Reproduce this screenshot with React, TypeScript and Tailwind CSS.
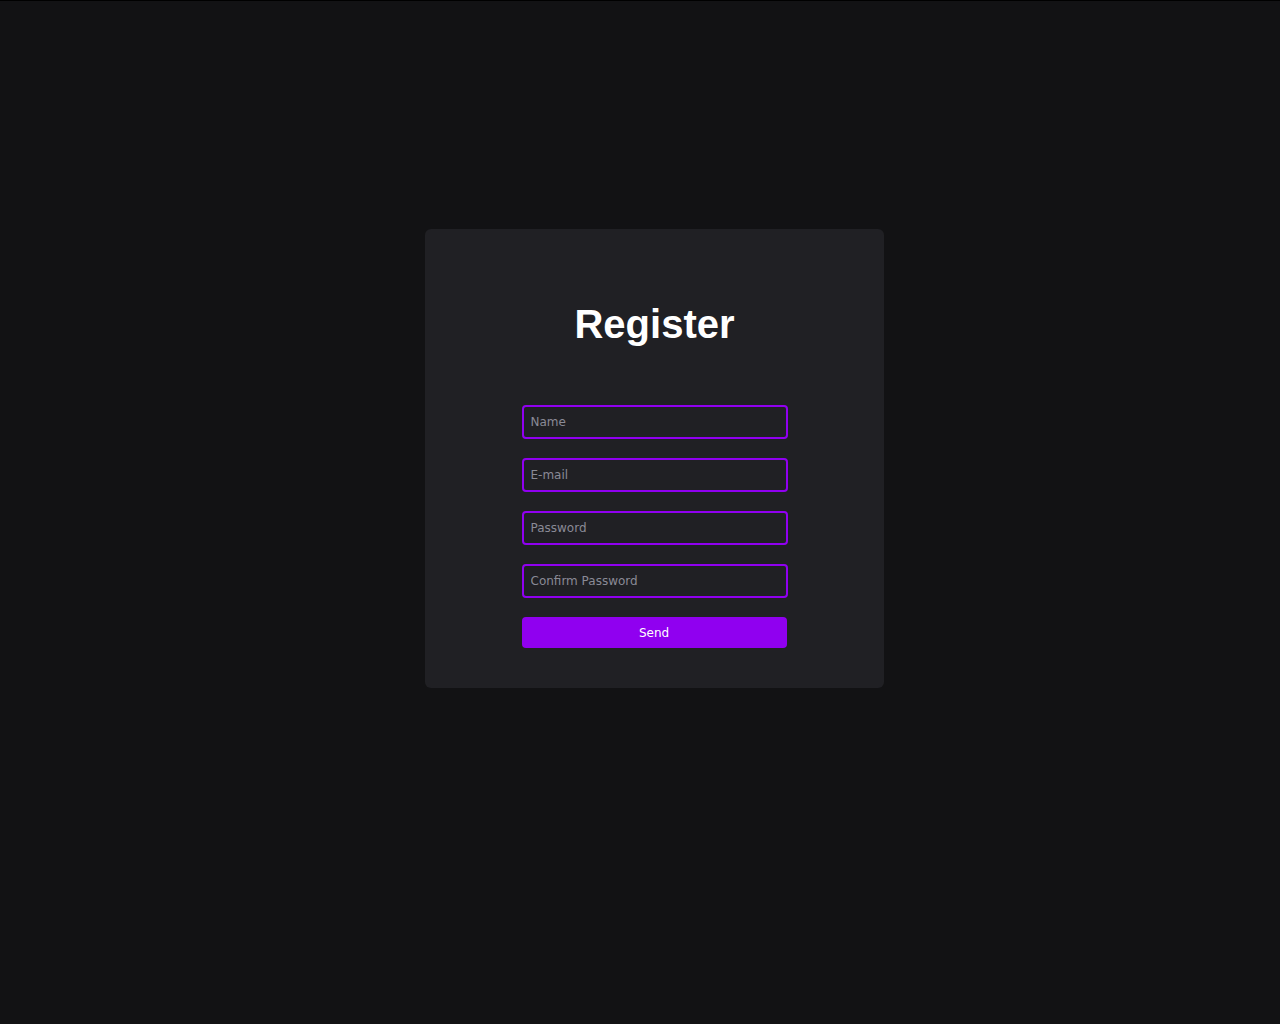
import React from "react";

export default function App() {
  const fields = ["Name", "E-mail", "Password", "Confirm Password"];
  return (
    <div className="min-h-screen w-full bg-[#121214] border-t border-black pt-[228px]">
      <div className="ml-[425px] w-[459px] h-[459px] rounded-md bg-[#202024] flex flex-col items-center pt-[72px]">
        <h1
          className="text-[40px] leading-[46px] font-bold text-white"
          style={{ fontFamily: '"Liberation Sans", Arial, sans-serif' }}
        >
          Register
        </h1>
        <form
          className="mt-[58px] w-[266px] flex flex-col gap-[19px]"
          style={{ fontFamily: '"DejaVu Sans", Verdana, sans-serif' }}
          onSubmit={(e) => e.preventDefault()}
        >
          {fields.map((f) => (
            <input
              key={f}
              type={f.includes("Password") ? "password" : "text"}
              placeholder={f}
              className="h-[34px] w-full rounded-[4px] border-2 border-[#9000f0] bg-[#202024] px-[7px] text-[12px] text-white placeholder:text-[#8a8a96] outline-none"
            />
          ))}
          <button
            type="submit"
            className="h-[31px] w-[265px] rounded-[4px] bg-[#9000f0] text-[12px] text-white"
          >
            Send
          </button>
        </form>
      </div>
    </div>
  );
}
